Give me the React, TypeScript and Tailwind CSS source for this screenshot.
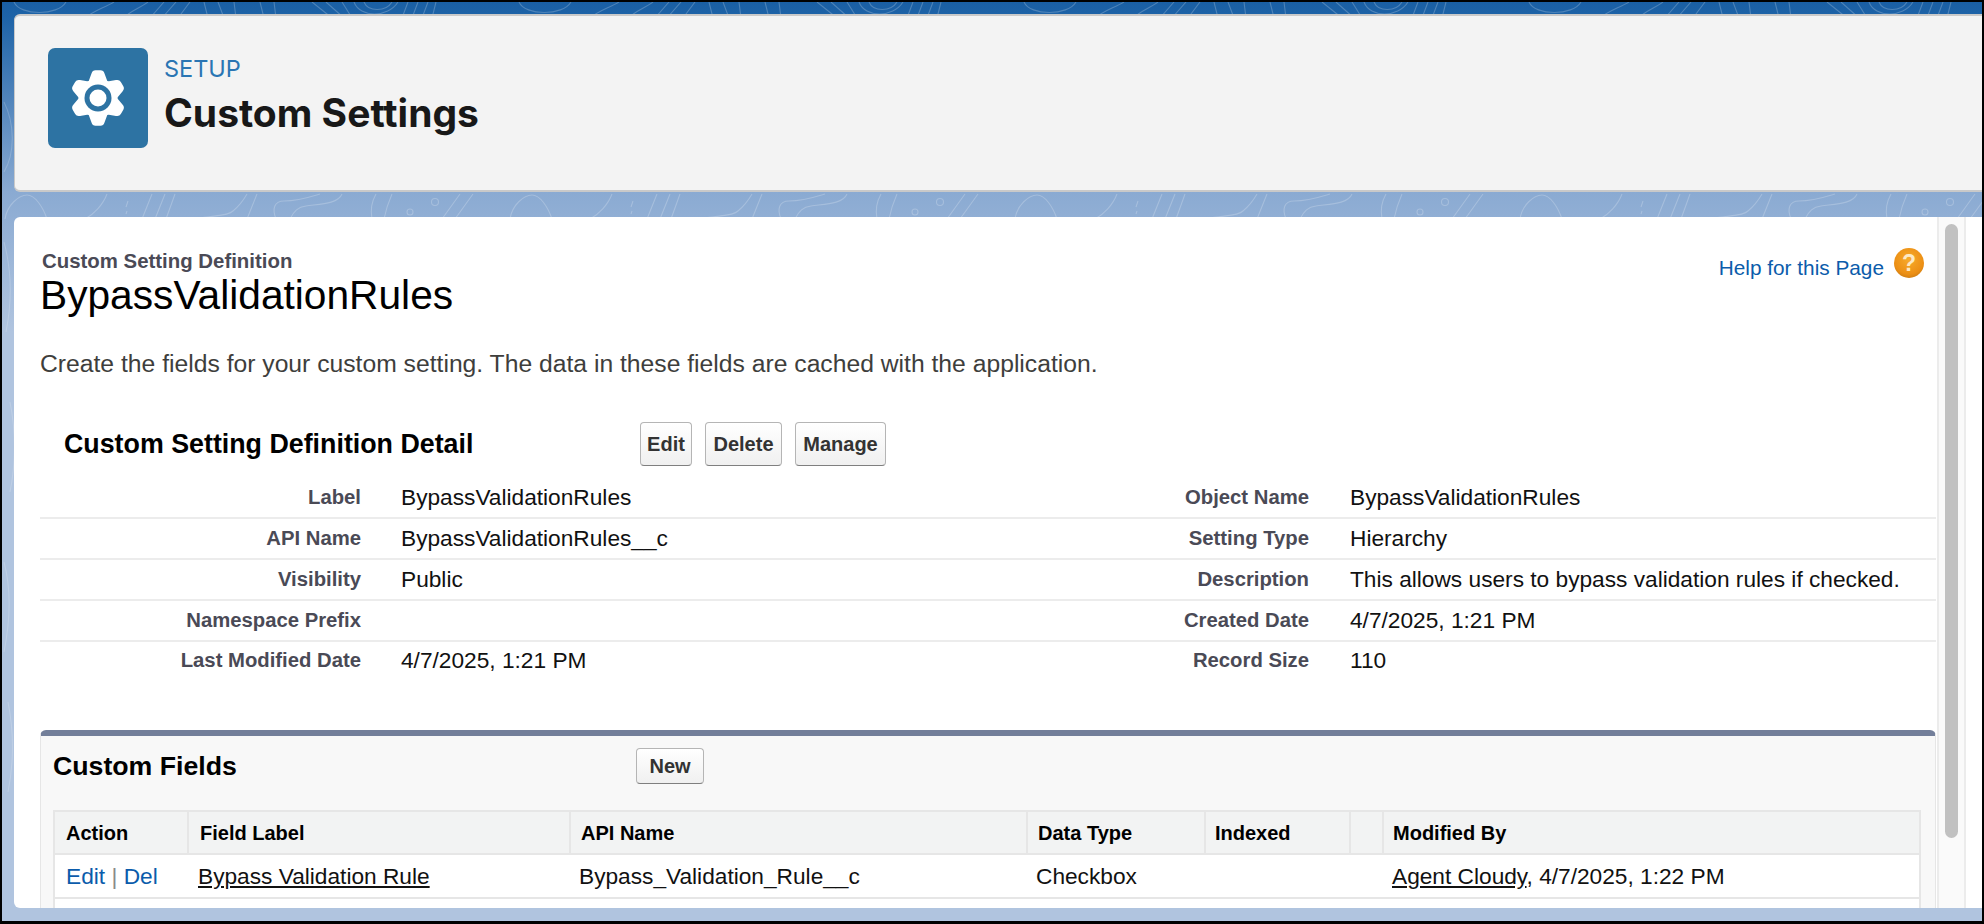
const detailRows = [
  ["Label", "BypassValidationRules", "Object Name", "BypassValidationRules"],
  ["API Name", "BypassValidationRules__c", "Setting Type", "Hierarchy"],
  ["Visibility", "Public", "Description", "This allows users to bypass validation rules if checked."],
  ["Namespace Prefix", "", "Created Date", "4/7/2025, 1:21 PM"],
  ["Last Modified Date", "4/7/2025, 1:21 PM", "Record Size", "110"],
];

function Gear() {
  return (
    <svg width="60" height="60" viewBox="-30 -30 60 60">
      {[0, 60, 120, 180, 240, 300].map((a) => (
        <path
          key={a}
          d="M-10 -15 L-6.5 -24.5 Q-5.5 -27.8 -2.5 -27.8 L2.5 -27.8 Q5.5 -27.8 6.5 -24.5 L10 -15 Z"
          fill="#fff"
          transform={`rotate(${a})`}
        />
      ))}
      <circle r="19.5" fill="#fff" />
      <circle r="13.5" fill="#2d73a3" />
      <circle r="8.5" fill="#fff" />
    </svg>
  );
}

// faint contour lines behind the page, the same tile repeats across
function Contours() {
  return (
    <svg className="absolute inset-0" width="1984" height="924" fill="none" stroke="#ffffff" strokeWidth="1.1">
      {[0, 505, 1010, 1515].map((x) => (
        <g key={x} transform={`translate(${x} 0)`}>
          <g strokeOpacity="0.22">
            <path d="M12 0c6 14 44 14 52 0M84 16c4-6 18-10 28-16M122 16c4-6 16-10 24-16M148 16l14-16M160 16l14-16M176 16l12-16" />
            <path d="M206 16l-4-16M222 16l-6-16M234 16l-2-16M262 16l-4-16M274 16l-2-16M310 0l20 16M324 0l18 16M340 0l10 16" />
            <path d="M352 0c6 16 34 16 44 0M362 0c4 10 22 10 28 0M400 16l6-16M410 16l6-16M420 16l6-16M430 16l4-16" />
          </g>
          <g strokeOpacity="0.22">
            <path d="M3 217c2-14 14-24 22-24 8 0 16 12 20 24M83 217c8-4 18-14 22-25M124 205l2-6M124 212l1-3" />
            <path d="M140 217l10-25M153 217l10-25M164 217l9-25M195 217c14-4 30-2 36-8 6-5 10-10 14-17M245 217l10-25" />
            <path d="M274 217c-4-10-2-18 8-18 14 0 26-4 36-7M288 217c4-8 8-12 16-13 14-2 32-2 36-12M370 217c-2-10 0-18 4-25M382 217c2-10 4-16 8-25" />
            <circle cx="433" cy="200" r="3.5" />
            <circle cx="408" cy="210" r="3" />
            <path d="M440 217l18-25M453 217l18-25" />
          </g>
        </g>
      ))}
      <path strokeOpacity="0.18" d="M2 100c10 20 12 50 0 70M2 240c8 30 8 60 2 90M8 400c6 30 6 60 0 90M2 560c8 30 6 60 0 90M6 700c6 30 6 60 0 90" />
    </svg>
  );
}

function PageButton({ label, width }: { label: string; width: string }) {
  return (
    <button className={`${width} h-[44px] rounded-[4px] border border-[#b5b5b5] border-b-[#7f7f7f] bg-[linear-gradient(#ffffff,#f0f0f0)] text-[20px] font-bold text-[#333333]`}>
      {label}
    </button>
  );
}

export default function App() {
  return (
    <div className="relative w-[1984px] h-[924px] overflow-hidden border-t-2 border-x-2 border-b-[3px] border-black bg-[linear-gradient(#1a5fa4_0,#1e63a7_16px,#8aaad2_190px,#b0c4df_330px)] pl-3 pt-[12px] flex flex-col gap-[25px] font-['Liberation_Sans',Arial,sans-serif]">
      <Contours />

      {/* Header card */}
      <header className="relative h-[178px] shrink-0 rounded-l-[6px] border-t-2 border-b-2 border-l border-[#c9c9c9] bg-[#f3f3f3] pl-[33px] pt-[32px] flex gap-4 font-['Inter',sans-serif]">
        <div className="w-[100px] h-[100px] rounded-[7px] bg-[#2d73a3] flex items-center justify-center">
          <Gear />
        </div>
        <div className="pt-[6px]">
          <div className="text-[23.5px] leading-[30px] text-[#2a75b3]">SETUP</div>
          <h1 className="mt-[6px] text-[39px] leading-[46px] font-bold text-[#181818]">Custom Settings</h1>
        </div>
      </header>

      {/* Main panel */}
      <main className="relative flex-1 min-h-0 mb-[13px] rounded-l-[6px] bg-white flex overflow-hidden text-[#111111]">
        <div className="w-[1923px] shrink-0 pl-[26px] overflow-hidden">
          <div className="flex justify-between pt-[33px] pr-[13px]">
            <div>
              <div className="pl-[2px] text-[20.4px] leading-[22px] font-bold text-[#4a4a56]">Custom Setting Definition</div>
              <div className="text-[40.7px] leading-[46px] text-black">BypassValidationRules</div>
            </div>
            <div className="flex items-start gap-[10px] h-fit mt-[-2px] text-[20.8px] leading-[30px] text-[#0b5cab]">
              <span className="mt-[5px]">Help for this Page</span>
              <div className="w-[30px] h-[30px] rounded-full bg-[radial-gradient(circle_at_50%_38%,#f7ab2c,#ec8f14_62%,#ad6a14)] flex items-center justify-center text-[23px] font-bold text-[#fde9c4]">
                ?
              </div>
            </div>
          </div>

          <p className="mt-[30px] text-[24.7px] leading-[32px] text-[#3e3e3c]">
            Create the fields for your custom setting. The data in these fields are cached with the application.
          </p>

          <div className="mt-[42px] flex items-center h-[44px]">
            <h2 className="w-[600px] pl-[24px] text-[26.8px] font-bold text-black">Custom Setting Definition Detail</h2>
            <div className="flex gap-[13px]">
              <PageButton label="Edit" width="w-[52px]" />
              <PageButton label="Delete" width="w-[77px]" />
              <PageButton label="Manage" width="w-[91px]" />
            </div>
          </div>

          <div className="mt-[12px] w-[1896px]">
            {detailRows.map((r, i) => (
              <div key={r[0]} className={`h-[41px] flex items-center text-[22.7px] ${i < 4 ? "border-b-2 border-[#ececec] pb-[1px]" : "pb-[4px]"}`}>
                <div className="w-[321px] text-right text-[20.3px] font-bold text-[#4a4a56]">{r[0]}</div>
                <div className="w-[688px] pl-[40px]">{r[1]}</div>
                <div className="w-[260px] text-right text-[20.3px] font-bold text-[#4a4a56]">{r[2]}</div>
                <div className="pl-[41px]">{r[3]}</div>
              </div>
            ))}
          </div>

          {/* Related list */}
          <section className="mt-[47px] w-[1896px] h-[400px] rounded-t-[6px] border-t-[6px] border-x border-t-[#737f9a] border-x-[#e6e6e6] bg-[#f8f8f8] px-[12px]">
            <div className="flex items-start pt-[12px] h-[74px]">
              <h3 className="w-[583px] mt-[-2px] text-[26.7px] font-bold text-black">Custom Fields</h3>
              <button className="w-[68px] h-[36px] rounded-[4px] border border-[#b5b5b5] border-b-[#7f7f7f] bg-[linear-gradient(#ffffff,#f0f0f0)] text-[20px] font-bold text-[#333333]">
                New
              </button>
            </div>
            <div className="w-[1868px] border-2 border-b-0 border-[#e6e6e6] bg-white text-[22.7px]">
              <div className="flex h-[43px] border-b-2 border-[#e6e6e6] bg-[#f2f3f3] text-[20px] font-bold text-black">
                <div className="w-[132px] pl-[11px] flex items-center">Action</div>
                <div className="w-[382px] pl-[11px] flex items-center border-l-2 border-[#e6e6e6]">Field Label</div>
                <div className="w-[457px] pl-[10px] flex items-center border-l-2 border-[#e6e6e6]">API Name</div>
                <div className="w-[178px] pl-[10px] flex items-center border-l-2 border-[#e6e6e6]">Data Type</div>
                <div className="w-[145px] pl-[9px] flex items-center border-l-2 border-[#e6e6e6]">Indexed</div>
                <div className="w-[33px] border-l-2 border-[#e6e6e6]" />
                <div className="flex-1 pl-[9px] flex items-center border-l-2 border-[#e6e6e6]">Modified By</div>
              </div>
              <div className="flex h-[44px] items-center border-b-2 border-[#e6e6e6]">
                <div className="w-[132px] pl-[11px]">
                  <span className="text-[#0b5cab]">Edit</span>
                  <span className="text-[#8a8a8a]"> | </span>
                  <span className="text-[#0b5cab]">Del</span>
                </div>
                <div className="w-[382px] pl-[11px] underline">Bypass Validation Rule</div>
                <div className="w-[457px] pl-[10px]">Bypass_Validation_Rule__c</div>
                <div className="w-[178px] pl-[10px]">Checkbox</div>
                <div className="w-[178px]" />
                <div className="flex-1 pl-[10px]">
                  <span className="underline">Agent Cloudy</span>, 4/7/2025, 1:22 PM
                </div>
              </div>
              <div className="h-[44px]" />
            </div>
          </section>
        </div>

        {/* Scrollbar */}
        <div className="w-[29px] shrink-0 border-x-2 border-[#ececec] bg-[#fafafa] pt-[7px] px-[6px]">
          <div className="h-[614px] rounded-full bg-[#c1c1c1]" />
        </div>
      </main>
    </div>
  );
}
